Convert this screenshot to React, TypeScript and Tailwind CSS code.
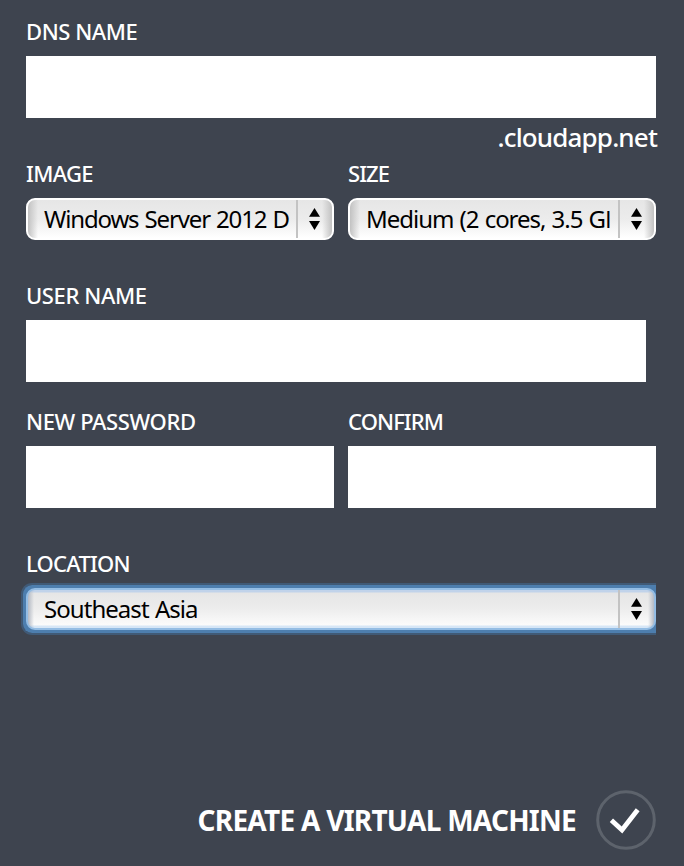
import type { ReactNode } from "react";

function Label({ children, tracking }: { children: ReactNode; tracking: string }) {
  return (
    <div className={`-mt-px h-[37px] whitespace-nowrap text-[22px] leading-6 font-medium text-white ${tracking}`}>
      {children}
    </div>
  );
}

function Arrows() {
  return (
    <svg className="h-[22px] w-[11px] shrink-0" viewBox="0 0 11 22" fill="black">
      <path d="M5.5 0 11 8.7H0Z" />
      <path d="M0 13.1H11L5.5 22Z" />
    </svg>
  );
}

function Select({ children, tracking, focused = false }: { children: ReactNode; tracking: string; focused?: boolean }) {
  return (
    <div
      className={`flex h-[42px] rounded-[9px] border-2 ${
        focused
          ? "border-[#94bde4] bg-[linear-gradient(to_right,#b4bac4_0,#c8ccd200_6px,#c8ccd200_calc(100%-6px),#b4bac4_100%),linear-gradient(to_bottom,#c1d3ea_0,#c1d3ea_2px,#e6e6e6_3px,#ececec_18px,#fbfbfb_35px,#d6e6f6_36px)]"
          : "border-white bg-[linear-gradient(to_right,#c2c2c2_0,#c2c2c200_10px,#c2c2c200_calc(100%-10px),#c2c2c2_100%),linear-gradient(to_bottom,#e6e6e6,#ececec_50%,#ffffff)]"
      }`}
    >
      <div className={`min-w-0 flex-1 whitespace-nowrap pl-4 text-2xl leading-[38px] text-black ${tracking}`}>
        {children}
      </div>
      <div className="flex w-9 items-center border-l-2 border-[#c3c3c3] pl-[11px]">
        <Arrows />
      </div>
    </div>
  );
}

export default function App() {
  return (
    <div className="h-[866px] w-[684px] overflow-hidden bg-[#3e444f] pt-5 pr-7 pl-[26px] font-['Noto_Sans',sans-serif]">
      <Label tracking="tracking-[-0.45px]">DNS NAME</Label>
      <div className="h-[62px] bg-white" />
      <div className="-mr-px h-11 pt-px text-right text-[26px] leading-9 font-medium tracking-[-0.85px] text-white">
        .cloudapp.net
      </div>
      <div className="grid h-[122px] grid-cols-2 gap-x-3.5">
        <div>
          <Label tracking="tracking-[-0.65px]">IMAGE</Label>
          <Select tracking="tracking-[-1.15px] [word-spacing:1px]">Windows Server 2012 D</Select>
        </div>
        <div>
          <Label tracking="tracking-[-0.9px]">SIZE</Label>
          <Select tracking="tracking-[-1.03px] [word-spacing:1px]">
            Medium (2 cores, 3.5 G<span className="font-['Open_Sans',sans-serif]">I</span>
          </Select>
        </div>
      </div>
      <Label tracking="tracking-[-0.4px]">USER NAME</Label>
      <div className="mr-2.5 mb-7 h-[62px] bg-white" />
      <div className="grid h-[142px] grid-cols-2 gap-x-3.5">
        <div>
          <Label tracking="tracking-[-0.4px]">NEW PASSWORD</Label>
          <div className="h-[62px] bg-white" />
        </div>
        <div>
          <Label tracking="tracking-[-0.9px]">CONFIRM</Label>
          <div className="h-[62px] bg-white" />
        </div>
      </div>
      <Label tracking="tracking-[-0.75px]">LOCATION</Label>
      <div className="-mt-[5px] -ml-[5px] rounded-l-[11px] border-2 border-r-0 border-[#405a76]">
        <div className="rounded-l-[9px] border-[3px] border-r-0 border-[#4d7eae] bg-[#4d7eae]">
          <Select tracking="tracking-[-0.95px] [word-spacing:1px]" focused>Southeast Asia</Select>
        </div>
      </div>
      <div className="mt-[155px] flex h-[60px] items-center justify-end gap-5">
        <span className="whitespace-nowrap text-[28px] leading-[60px] font-bold tracking-[-0.73px] text-white">
          CREATE A VIRTUAL MACHINE
        </span>
        <svg className="size-[60px] shrink-0" viewBox="0 0 60 60" fill="none">
          <circle cx="30" cy="30" r="28.3" stroke="#5d636c" strokeWidth="3" />
          <path d="M15.4 30.2 26 40 41.7 19.8" stroke="white" strokeWidth="4.8" />
        </svg>
      </div>
    </div>
  );
}
